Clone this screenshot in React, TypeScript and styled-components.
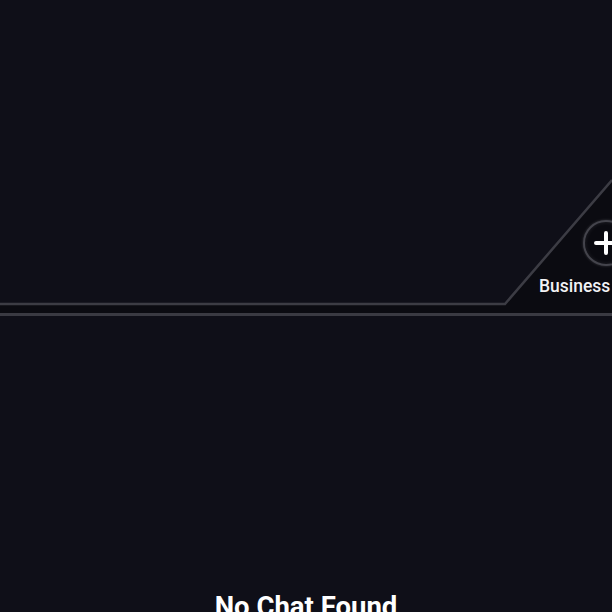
import React from 'react'
import styled, { createGlobalStyle } from 'styled-components'

const GlobalStyle = createGlobalStyle`
  html, body {
    margin: 0;
    padding: 0;
    background: #0f0f18;
    font-family: Roboto, 'Liberation Sans', sans-serif;
    overflow: hidden;
  }
`

const PageWrapper = styled.div`
  width: 612px;
  height: 612px;
  display: flex;
  flex-direction: column;
  background: #0f0f18;
  color: #ffffff;
  overflow: hidden;
`

const TopSpace = styled.div`
  height: 170px;
  flex-shrink: 0;
`

const NavBar = styled.div`
  position: relative;
  height: 147px;
  flex-shrink: 0;
`

const NavShape = styled.svg`
  position: absolute;
  inset: 0;
`

const NavItems = styled.div`
  position: relative;
  height: 100%;
  display: flex;
  justify-content: flex-end;
  align-items: flex-start;
`

const Tab = styled.div`
  width: 96px;
  margin-right: -23px;
  padding-top: 50px;
  display: flex;
  flex-direction: column;
  align-items: flex-start;
`

const AddButton = styled.div`
  width: 46px;
  height: 46px;
  margin-left: 44px;
  border-radius: 50%;
  box-sizing: border-box;
  border: 2px solid #44444c;
  background: #0a0a10;
  box-shadow: 0 0 3px rgba(255, 255, 255, 0.18), inset 0 0 4px rgba(255, 255, 255, 0.1);
  display: flex;
  align-items: center;
  justify-content: center;
`

const TabLabel = styled.span`
  margin-top: 10px;
  font-size: 17.5px;
  font-weight: 500;
  line-height: 20px;
  color: #f2f2f5;
  white-space: nowrap;
`

const Content = styled.div`
  flex: 1;
  display: flex;
  align-items: flex-end;
  justify-content: center;
`

const EmptyTitle = styled.div`
  font-size: 27.5px;
  font-weight: 700;
  line-height: 32px;
  margin-bottom: -11px;
  color: #ffffff;
  white-space: nowrap;
`

const PlusIcon = () => (
  <svg width="24" height="24" viewBox="0 0 24 24">
    <path d="M12 2v20M2 12h20" stroke="#ffffff" strokeWidth="4" strokeLinecap="round" />
  </svg>
)

const App = () => {
  return (
    <>
      <GlobalStyle />
      <PageWrapper>
        <TopSpace />
        <NavBar>
          <NavShape width="612" height="147" viewBox="0 0 612 147">
            <path d="M505 134 L612 10 L612 144 L0 144 L0 134 Z" fill="#0b0b11" />
            <path d="M0 134 L505 134 L612 10" fill="none" stroke="#3c3c44" strokeWidth="2.5" />
            <path d="M0 144.5 L612 144.5" stroke="#3a3a42" strokeWidth="3" />
          </NavShape>
          <NavItems>
            <Tab>
              <AddButton>
                <PlusIcon />
              </AddButton>
              <TabLabel>Business</TabLabel>
            </Tab>
          </NavItems>
        </NavBar>
        <Content>
          <EmptyTitle>No Chat Found</EmptyTitle>
        </Content>
      </PageWrapper>
    </>
  )
}

export default App
